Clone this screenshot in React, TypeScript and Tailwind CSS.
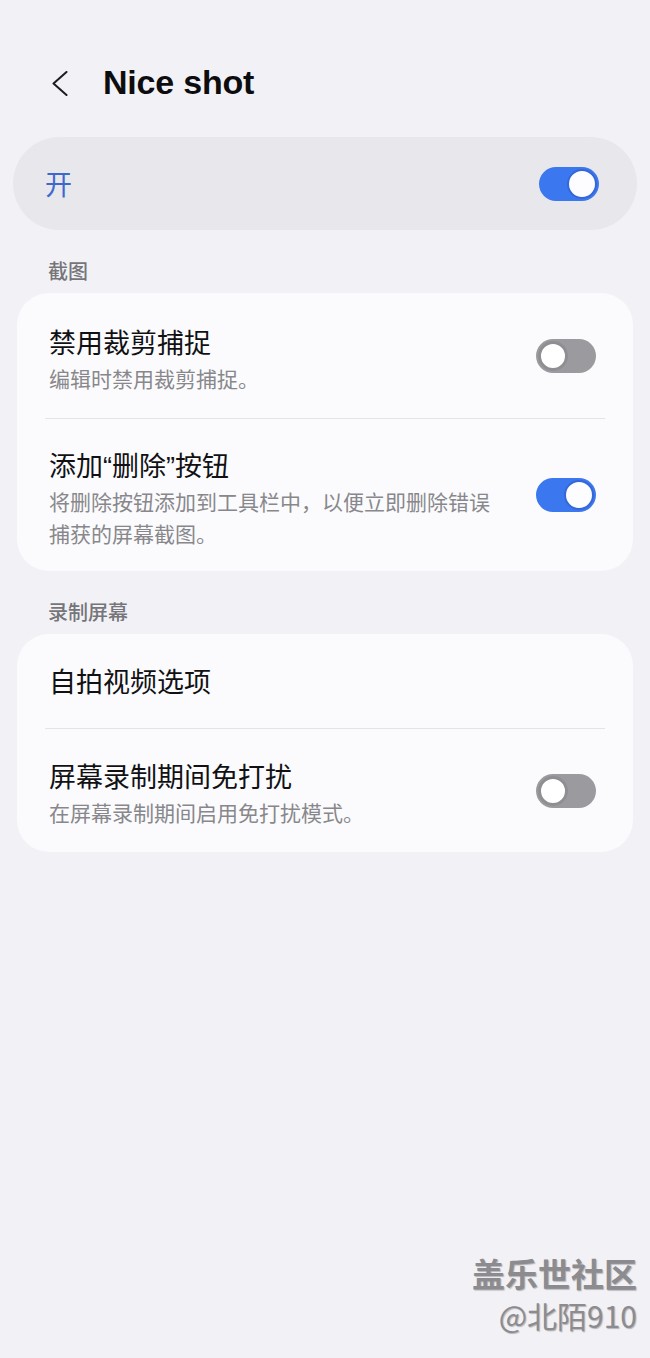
import React from 'react';

const cjk = "font-['Noto_Sans_CJK_SC','Noto_Sans',sans-serif]";

type ToggleProps = { on: boolean };

const Toggle = ({ on }: ToggleProps) => (
  <div
    className={
      on
        ? 'flex h-[34px] w-[60px] shrink-0 items-center justify-end rounded-full bg-[#3b78ef] p-[2px]'
        : 'flex h-[34px] w-[60px] shrink-0 items-center justify-start rounded-full bg-[#9b9b9f] p-[2px]'
    }
  >
    <div
      className={
        on
          ? 'h-[30px] w-[30px] rounded-full border-[2px] border-[#3567d8] bg-[#fdfdff]'
          : 'h-[30px] w-[30px] rounded-full border-[3px] border-[#8f8f93] bg-white'
      }
    />
  </div>
);

type RowProps = {
  title: React.ReactNode;
  desc?: string;
  toggle?: boolean;
  className: string;
};

const Row = ({ title, desc, toggle, className }: RowProps) => (
  <div className="flex items-center pl-[32px] pr-[37px]">
    <div className={`flex-1 pr-[28px] ${className}`}>
      <p className="h-[34px] text-[27px] leading-[34px] text-[#111114]">{title}</p>
      {desc && <p className="mt-[3px] text-[21px] leading-[32px] text-[#88888c]">{desc}</p>}
    </div>
    {toggle !== undefined && <Toggle on={toggle} />}
  </div>
);

const Divider = () => <div className="mx-[28px] h-px bg-[#e3e3e8]" />;

const SectionLabel = ({ children }: { children: string }) => (
  <p className="mt-[27px] mb-[8px] pl-[48px] text-[20px] leading-[28px] font-medium text-[#75757a]">{children}</p>
);

const Q = ({ children }: { children: string }) => (
  <span className="font-['Liberation_Sans',sans-serif] leading-none">{children}</span>
);

export default function App() {
  return (
    <div className={`relative h-[1358px] w-[650px] overflow-hidden bg-[#f2f2f6] pt-[46px] ${cjk}`}>
      <header className="flex h-[72px] items-center pl-[52px]">
        <svg width="16" height="25" viewBox="0 0 16 25" fill="none" className="mt-[2px]">
          <polyline points="14.5,1 1.5,12.5 14.5,24" stroke="#1c1c1e" strokeWidth="2" strokeLinecap="round" strokeLinejoin="round" />
        </svg>
        <h1 className="ml-[35px] font-['Liberation_Sans',sans-serif] text-[34px] font-bold tracking-[-0.2px] text-[#0d0d0f]">
          Nice shot
        </h1>
      </header>

      <div className="mx-[13px] mt-[19px] flex h-[93px] items-center justify-between rounded-full bg-[#e8e8ec] pl-[32px] pr-[38px]">
        <span className="text-[27px] leading-[34px] text-[#3d69cf]">开</span>
        <Toggle on />
      </div>

      <SectionLabel>截图</SectionLabel>
      <div className="mx-[17px] rounded-[32px] bg-[#fbfbfd]">
        <Row title="禁用裁剪捕捉" desc="编辑时禁用裁剪捕捉。" toggle={false} className="pt-[32px] pb-[24px]" />
        <Divider />
        <Row
          title={
            <>
              添加<Q>“</Q>删除<Q>”</Q>按钮
            </>
          }
          desc="将删除按钮添加到工具栏中，以便立即删除错误捕获的屏幕截图。"
          toggle
          className="pt-[29px] pb-[22px]"
        />
      </div>

      <SectionLabel>录制屏幕</SectionLabel>
      <div className="mx-[17px] rounded-[32px] bg-[#fbfbfd]">
        <Row title="自拍视频选项" className="pt-[30px] pb-[30px]" />
        <Divider />
        <Row title="屏幕录制期间免打扰" desc="在屏幕录制期间启用免打扰模式。" toggle={false} className="pt-[30px] pb-[24px]" />
      </div>

      <div className="absolute right-[13px] bottom-[22px] flex flex-col items-end text-[#8c8c90] [text-shadow:1px_1px_1px_rgba(0,0,0,0.25)]">
        <span className="text-[33px] leading-[42px] font-bold">盖乐世社区</span>
        <span className="text-[30px] leading-[42px]">@北陌910</span>
      </div>
    </div>
  );
}
